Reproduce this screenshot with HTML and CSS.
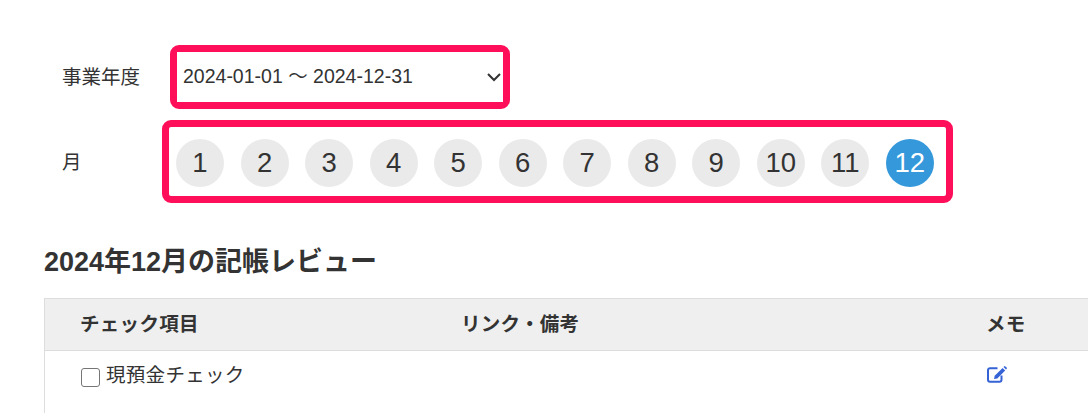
FILE: index.html
```html
<!DOCTYPE html>
<html lang="ja">
<head>
  <meta charset="UTF-8">
  <title>記帳レビュー</title>
  <link rel="stylesheet" href="styles.css">
</head>
<body>
  <div class="filters">
    <div class="filter-row">
      <label class="filter-label year-label" for="fiscal-year">事業年度</label>
      <div class="highlight select-box">
        <select id="fiscal-year" class="year-select">
          <option>2024-01-01 〜 2024-12-31</option>
        </select>
      </div>
    </div>
    <div class="filter-row">
      <span class="filter-label month-label">月</span>
      <div class="highlight month-box">
        <a class="month">1</a>
        <a class="month">2</a>
        <a class="month">3</a>
        <a class="month">4</a>
        <a class="month">5</a>
        <a class="month">6</a>
        <a class="month">7</a>
        <a class="month">8</a>
        <a class="month">9</a>
        <a class="month">10</a>
        <a class="month">11</a>
        <a class="month active">12</a>
      </div>
    </div>
  </div>

  <h2 class="review-title">2024年12月の記帳レビュー</h2>

  <div class="review-table">
    <div class="table-row table-head">
      <div>チェック項目</div>
      <div>リンク・備考</div>
      <div>メモ</div>
    </div>
    <div class="table-row table-body">
      <label class="check-item"><input type="checkbox">現預金チェック</label>
      <div></div>
      <div>
        <svg class="memo-icon" viewBox="0 0 20 17" width="20" height="17" aria-hidden="true">
          <path d="M14.5 9.5v4.2a2 2 0 0 1-2 2H3a2 2 0 0 1-2-2V4.2a2 2 0 0 1 2-2h7.5" fill="none" stroke="#3563d6" stroke-width="2"/>
          <path d="M15.6 1.9l2.6 2.6-7.9 7.9-3.3.7.7-3.3z" fill="#3563d6"/>
          <path d="M16.5 1l.6-.6a1 1 0 0 1 1.3 0l1.2 1.2a1 1 0 0 1 0 1.3l-.6.6z" fill="#3563d6"/>
        </svg>
      </div>
    </div>
  </div>
</body>
</html>
```

FILE: styles.css
```css
* {
  box-sizing: border-box;
}

html,
body {
  height: 413px;
  overflow: hidden;
}

body {
  margin: 0;
  background-color: #fff;
  color: #333;
  font-family: "Liberation Sans", "Noto Sans CJK JP", sans-serif;
  font-size: 19.5px;
}

.filters {
  padding: 45px 0 0 62px;
}

.filter-row {
  display: flex;
  align-items: center;
  margin-bottom: 11px;
}

.filter-label {
  flex-shrink: 0;
}

.year-label {
  width: 108px;
  padding-bottom: 4px;
}

.month-label {
  width: 100px;
  padding-bottom: 2px;
}

.highlight {
  border: 7px solid #ff0f5a;
  border-radius: 9px;
}

.select-box {
  width: 340px;
  height: 64px;
}

.year-select {
  display: block;
  width: 100%;
  height: 100%;
  padding: 0 0 2px 6px;
  border: none;
  outline: none;
  appearance: none;
  background: #fff url("data:image/svg+xml,%3Csvg xmlns='http://www.w3.org/2000/svg' width='14' height='9'%3E%3Cpath d='M1 1l6 6 6-6' fill='none' stroke='%23333' stroke-width='2'/%3E%3C/svg%3E") no-repeat right 2px center;
  color: #333;
  font-family: inherit;
  font-size: 19.5px;
}

.month-box {
  display: flex;
  justify-content: space-between;
  width: 791px;
  height: 83px;
  padding: 12px 12px 0 7px;
}

.month {
  display: flex;
  align-items: center;
  justify-content: center;
  width: 48px;
  height: 48px;
  border-radius: 50%;
  background-color: #eaeaea;
  font-size: 27.5px;
}

.month.active {
  background-color: #3498db;
  color: #fff;
}

.review-title {
  margin: 41px 0 0 44px;
  font-size: 27px;
  line-height: 36px;
}

.review-table {
  width: 1060px;
  margin: 18px 0 0 44px;
  border-top: 1px solid #ddd;
  border-left: 1px solid #ddd;
}

.table-row {
  display: grid;
  grid-template-columns: 381px 525px 1fr;
  padding-left: 36px;
}

.table-head {
  height: 52px;
  padding-left: 35px;
  padding-bottom: 4px;
  align-items: center;
  border-bottom: 1px solid #ddd;
  background-color: #efefef;
  font-weight: bold;
  letter-spacing: 0.3px;
}

.table-body {
  height: 70px;
  padding-top: 11px;
}

.check-item {
  display: flex;
  align-items: flex-start;
  line-height: 26px;
  letter-spacing: 0.3px;
}

.check-item input {
  width: 19px;
  height: 19px;
  margin: 6px 6px 0 0;
  appearance: none;
  border: 1.5px solid #767676;
  border-radius: 3px;
  background-color: #fff;
}

.memo-icon {
  display: block;
  margin-top: 4px;
}
```
